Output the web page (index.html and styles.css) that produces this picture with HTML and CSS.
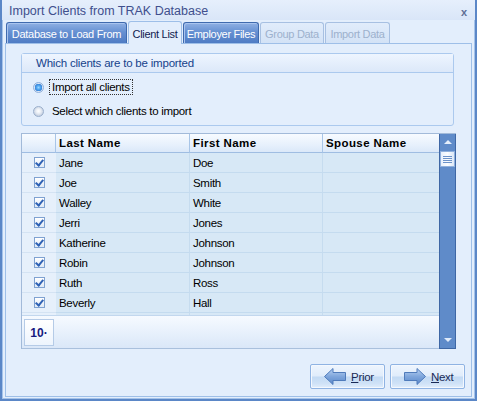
FILE: index.html
```html
<!DOCTYPE html>
<html>
<head>
<meta charset="utf-8">
<title>Import Clients from TRAK Database</title>
<link rel="stylesheet" href="styles.css">
</head>
<body>
<div class="window">
  <div class="titlebar">
    <span class="title">Import Clients from TRAK Database</span>
    <span class="close">x</span>
  </div>
  <div class="client">
    <div class="tabs">
      <div class="tab blue w1">Database to Load From</div>
      <div class="tab active w2">Client List</div>
      <div class="tab blue w3">Employer Files</div>
      <div class="tab disabled w4">Group Data</div>
      <div class="tab disabled w5">Import Data</div>
    </div>
    <div class="panel">
      <div class="group">
        <div class="group-head">Which clients are to be imported</div>
        <div class="group-body">
          <div class="radio checked"><span class="dot"></span><span class="label focus">Import all clients</span></div>
          <div class="radio"><span class="dot"></span><span class="label">Select which clients to import</span></div>
        </div>
      </div>

      <div class="grid">
        <div class="grid-main">
          <div class="row head">
            <div class="cell chk"></div>
            <div class="cell c1">Last Name</div>
            <div class="cell c2">First Name</div>
            <div class="cell c3">Spouse Name</div>
          </div>
          <div class="row"><div class="cell chk"><span class="box"></span></div><div class="cell c1">Jane</div><div class="cell c2">Doe</div><div class="cell c3"></div></div>
          <div class="row"><div class="cell chk"><span class="box"></span></div><div class="cell c1">Joe</div><div class="cell c2">Smith</div><div class="cell c3"></div></div>
          <div class="row"><div class="cell chk"><span class="box"></span></div><div class="cell c1">Walley</div><div class="cell c2">White</div><div class="cell c3"></div></div>
          <div class="row"><div class="cell chk"><span class="box"></span></div><div class="cell c1">Jerri</div><div class="cell c2">Jones</div><div class="cell c3"></div></div>
          <div class="row"><div class="cell chk"><span class="box"></span></div><div class="cell c1">Katherine</div><div class="cell c2">Johnson</div><div class="cell c3"></div></div>
          <div class="row"><div class="cell chk"><span class="box"></span></div><div class="cell c1">Robin</div><div class="cell c2">Johnson</div><div class="cell c3"></div></div>
          <div class="row"><div class="cell chk"><span class="box"></span></div><div class="cell c1">Ruth</div><div class="cell c2">Ross</div><div class="cell c3"></div></div>
          <div class="row"><div class="cell chk"><span class="box"></span></div><div class="cell c1">Beverly</div><div class="cell c2">Hall</div><div class="cell c3"></div></div>
          <div class="row partial"><div class="cell chk"></div><div class="cell c1"></div><div class="cell c2"></div><div class="cell c3"></div></div>
          <div class="footer"><div class="pager">10·</div></div>
        </div>
        <div class="scroll">
          <div class="sb-up"></div>
          <div class="sb-thumb"><span></span><span></span><span></span><span></span></div>
          <div class="sb-track"></div>
          <div class="sb-down"></div>
        </div>
      </div>

      <div class="buttons">
        <div class="btn">
          <svg class="arrow" width="22" height="17" viewBox="0 0 22 17">
            <defs>
              <linearGradient id="ag1" x1="0" y1="0" x2="0" y2="1">
                <stop offset="0" stop-color="#b9d2f2"/>
                <stop offset="0.5" stop-color="#7fa6dc"/>
                <stop offset="1" stop-color="#5a88c9"/>
              </linearGradient>
            </defs>
            <polygon points="0.5,8.5 9,0.5 9,4.5 21.5,4.5 21.5,12.5 9,12.5 9,16.5" fill="url(#ag1)" stroke="#4f7bbb" stroke-width="1"/>
          </svg>
          <span class="btn-text"><u>P</u>rior</span>
        </div>
        <div class="btn">
          <svg class="arrow" width="22" height="17" viewBox="0 0 22 17">
            <defs>
              <linearGradient id="ag2" x1="0" y1="0" x2="0" y2="1">
                <stop offset="0" stop-color="#b9d2f2"/>
                <stop offset="0.5" stop-color="#7fa6dc"/>
                <stop offset="1" stop-color="#5a88c9"/>
              </linearGradient>
            </defs>
            <polygon points="21.5,8.5 13,0.5 13,4.5 0.5,4.5 0.5,12.5 13,12.5 13,16.5" fill="url(#ag2)" stroke="#4f7bbb" stroke-width="1"/>
          </svg>
          <span class="btn-text"><u>N</u>ext</span>
        </div>
      </div>
    </div>
  </div>
</div>
</body>
</html>
```

FILE: styles.css
```css
* { box-sizing: border-box; }

html, body {
  margin: 0;
  padding: 0;
  background: #dfeafa;
}

body {
  font-family: "Liberation Sans", Arial, sans-serif;
  font-size: 11px;
  letter-spacing: -0.3px;
  color: #000;
}

.window {
  width: 477px;
  height: 401px;
  border-left: 2px solid #5b87c7;
  border-right: 2px solid #5b87c7;
  border-bottom: 2px solid #5b87c7;
  background: #e3eefc;
  display: flex;
  flex-direction: column;
}

.titlebar {
  height: 20px;
  flex: none;
  display: flex;
  align-items: center;
  justify-content: space-between;
  padding: 0 8px 0 7px;
  background: linear-gradient(#e6effc, #d9e6f8);
}

.title {
  font-size: 12.5px;
  letter-spacing: 0;
  color: #3f4f8d;
  padding-top: 1px;
}

.close {
  font-size: 11px;
  font-weight: bold;
  color: #5c6f95;
  letter-spacing: 0;
  padding-top: 3px;
}

.client {
  flex: 1;
  border: 1px solid #a5c3ea;
  border-top: none;
  padding: 1px 2px 1px 2px;
  display: flex;
  flex-direction: column;
  background: #e3eefc;
}

.tabs {
  display: flex;
  align-items: flex-end;
  gap: 1px;
  height: 22px;
  padding-left: 1px;
  position: relative;
  z-index: 2;
}

.tab {
  height: 21px;
  border: 1px solid #3f6aae;
  border-bottom: none;
  border-radius: 3px 3px 0 0;
  display: flex;
  align-items: center;
  justify-content: center;
  white-space: nowrap;
  padding-top: 1px;
}

.tab.blue {
  color: #fff;
  background: linear-gradient(#8fb0e3, #6690d2 45%, #4f7cc4);
  box-shadow: inset 1px 1px 0 #a9c4ee;
}

.tab.active {
  height: 23px;
  margin-bottom: -1px;
  border-color: #9ebfe8;
  background: #e3eefc;
  color: #10214f;
}

.tab.disabled {
  border-color: #a7c0e2;
  background: linear-gradient(#e1ecfb, #d3e2f6);
  color: #9db1cd;
}

.w1 { width: 121px; }
.w2 { width: 54px; }
.w3 { width: 76px; }
.w4 { width: 64px; }
.w5 { width: 65px; }

.panel {
  flex: 1;
  border: 1px solid #9ebfe8;
  background: #e3eefc;
  padding: 9px 6px 0 15px;
  display: flex;
  flex-direction: column;
}

/* group box */
.group {
  margin-right: 11px;
  height: 73px;
  border: 1px solid #abc9ee;
  border-radius: 3px;
  display: flex;
  flex-direction: column;
}

.group-head {
  height: 19px;
  flex: none;
  border-bottom: 1px solid #abc9ee;
  background: linear-gradient(#eef5ff, #dce8f9);
  color: #15428b;
  padding-left: 14px;
  display: flex;
  align-items: center;
  letter-spacing: -0.2px;
  font-size: 11.5px;
}

.group-body {
  padding: 5px 0 0 11px;
  display: flex;
  flex-direction: column;
  gap: 6px;
}

.radio {
  height: 18px;
  display: flex;
  align-items: center;
}

.dot {
  width: 11px;
  height: 11px;
  border-radius: 50%;
  border: 1px solid #9aafcc;
  background: radial-gradient(circle at 50% 45%, #ffffff 0, #eef2f8 2px, #d2dbe8 4px, #bcc8da 5.5px);
  margin-right: 5px;
  flex: none;
}

.radio.checked .dot {
  border-color: #8fb0dc;
  background: radial-gradient(circle, #9ad6ff 0, #4fa6f0 2px, #3b84d8 3.5px, #d9e6f6 4px, #c6d6ec 5.5px);
}

.label {
  padding: 1px 2px 1px 2px;
  border: 1px solid transparent;
  font-size: 11.5px;
}

.label.focus {
  border: 1px dotted #333;
}

/* grid */
.grid {
  margin-top: 7px;
  margin-right: 9px;
  height: 216px;
  border-top: 1px solid #a2bad9;
  border-left: 1px solid #a2bad9;
  display: flex;
}

.grid-main {
  flex: 1;
  display: flex;
  flex-direction: column;
  border-bottom: 1px solid #a9c0dd;
}

.row {
  display: grid;
  grid-template-columns: 34px 134px 133px 1fr;
  height: 20px;
  background: #d7e8f6;
}

.cell {
  border-bottom: 1px solid #c4dbef;
  border-right: 1px solid #c6dcef;
  padding-left: 3px;
  display: flex;
  align-items: center;
  white-space: nowrap;
  font-size: 11.5px;
  padding-top: 1px;
}

.cell.c3 { border-right: none; }

.cell.chk {
  background: #e6f0fb;
  justify-content: center;
  padding-left: 0;
  padding-top: 0;
  border-right: none;
  border-bottom-color: #d4e3f3;
}

.row.head {
  height: 19px;
  background: linear-gradient(#f7fbff, #e6f0fc 60%, #d9e7f8);
}

.row.head .cell {
  border-bottom: 1px solid #9fbde2;
  border-right: 1px solid #a8c5e7;
  font-weight: bold;
  letter-spacing: 0.4px;
  font-size: 11.5px;
  padding-top: 0;
}

.row.head .cell.chk {
  background: transparent;
  border-right: 1px solid #a8c5e7;
}

.row.head .cell.c3 { border-right: none; }

.row.partial {
  height: 2px;
}

.row.partial .cell { border-bottom: none; }

.box {
  width: 11px;
  height: 11px;
  border: 1px solid #7fa2d1;
  background: linear-gradient(#ffffff, #dfeaf7);
  position: relative;
}

.box::after {
  content: "";
  position: absolute;
  left: 2px;
  top: 0px;
  width: 3px;
  height: 6px;
  border-right: 2px solid #2f62b5;
  border-bottom: 2px solid #2f62b5;
  transform: rotate(40deg);
}

.footer {
  flex: 1;
  background: linear-gradient(#f6faff, #e8f1fc 50%, #dae7f8);
  border-top: 1px solid #c2d7ee;
  padding: 3px 0 0 2px;
}

.pager {
  width: 30px;
  height: 27px;
  border: 1px solid #b5cbe7;
  background: linear-gradient(#ffffff, #edf4fd);
  color: #16197e;
  font-weight: bold;
  font-size: 12px;
  letter-spacing: 0;
  display: flex;
  align-items: center;
  justify-content: center;
}

.scroll {
  width: 17px;
  flex: none;
  background: #5f8bc9;
  border: 1px solid #3e67a5;
  border-top: none;
  display: flex;
  flex-direction: column;
  align-items: center;
}

.sb-up, .sb-down {
  height: 17px;
  width: 100%;
  flex: none;
  display: flex;
  justify-content: center;
  align-items: center;
}

.sb-up::before {
  content: "";
  border-left: 4px solid transparent;
  border-right: 4px solid transparent;
  border-bottom: 4px solid #e4eefb;
  margin-top: -1px;
}

.sb-down::before {
  content: "";
  border-left: 4px solid transparent;
  border-right: 4px solid transparent;
  border-top: 4px solid #dfeaf9;
  margin-top: 1px;
}

.sb-thumb {
  width: 15px;
  height: 16px;
  flex: none;
  background: linear-gradient(90deg, #e7f0fc, #fbfdff 50%, #dbe7f7);
  border: 1px solid #8fb0dd;
  display: flex;
  flex-direction: column;
  align-items: center;
  justify-content: center;
  gap: 1px;
}

.sb-thumb span {
  width: 9px;
  height: 1px;
  background: #6b92c9;
}

.sb-track { flex: 1; }

/* buttons */
.buttons {
  margin-top: 15px;
  display: flex;
  justify-content: flex-end;
  gap: 5px;
}

.btn {
  width: 75px;
  height: 25px;
  border: 1px solid #8fb3e3;
  border-radius: 2px;
  background: linear-gradient(#eef5fe, #e0ecfb 48%, #c3daf4 52%, #cfe2f7 80%, #e2eefc);
  box-shadow: inset 0 0 0 1px #f4f8fe;
  display: flex;
  align-items: center;
  padding-left: 13px;
  gap: 5px;
}

.arrow { flex: none; }

.btn-text {
  font-size: 11.5px;
  color: #1a2a55;
}

.btn-text u { text-underline-offset: 1px; }
```
